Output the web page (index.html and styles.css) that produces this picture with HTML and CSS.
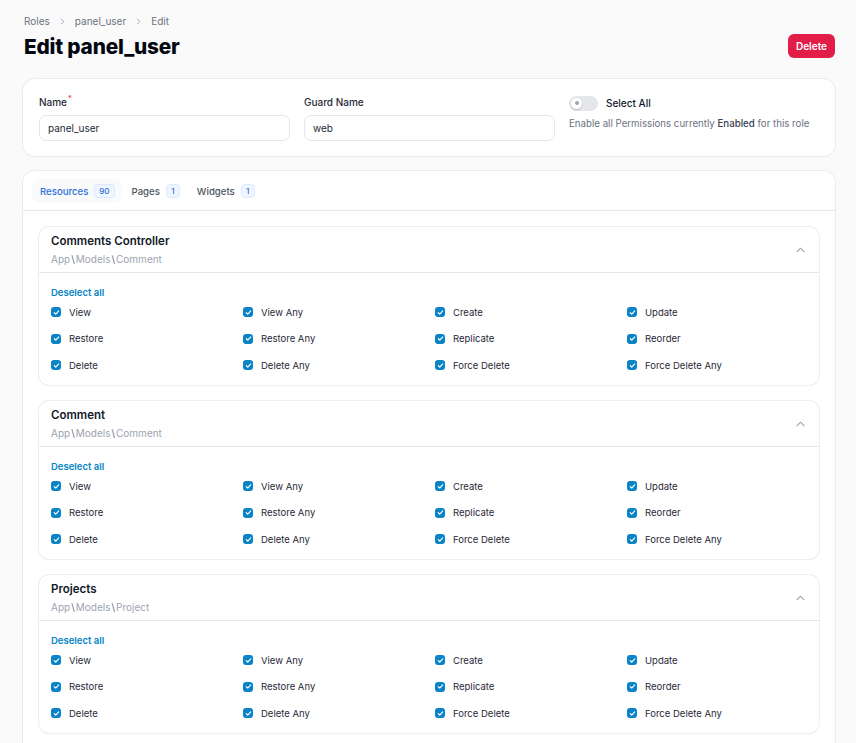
FILE: index.html
```html
<!DOCTYPE html>
<html>
<head>
<meta charset="utf-8">
<link rel="stylesheet" href="styles.css">
</head>
<body>
<div class="page">
  <nav class="crumbs">
    <span>Roles</span><svg class="sep" viewBox="0 0 6 8" width="5" height="7"><path d="M1.5 1l3 3-3 3" fill="none" stroke="#9ca3af" stroke-width="1.1" stroke-linecap="round" stroke-linejoin="round"/></svg><span>panel_user</span><svg class="sep" viewBox="0 0 6 8" width="5" height="7"><path d="M1.5 1l3 3-3 3" fill="none" stroke="#9ca3af" stroke-width="1.1" stroke-linecap="round" stroke-linejoin="round"/></svg><span>Edit</span>
  </nav>
  <div class="head">
    <h1>Edit panel_user</h1>
    <button class="btn-delete">Delete</button>
  </div>

  <section class="card form-card">
    <div class="field">
      <label>Name<sup>*</sup></label>
      <div class="input">panel_user</div>
    </div>
    <div class="field">
      <label>Guard Name</label>
      <div class="input">web</div>
    </div>
    <div class="field select-all">
      <div class="toggle-row"><span class="toggle"><span class="knob"></span></span><span class="toggle-label">Select All</span></div>
      <p class="help">Enable all Permissions currently <b>Enabled</b> for this role</p>
    </div>
  </section>

  <section class="card tabs-card">
    <div class="tabs">
      <div class="tab active">Resources <span class="badge">90</span></div>
      <div class="tab">Pages <span class="badge">1</span></div>
      <div class="tab">Widgets <span class="badge">1</span></div>
    </div>
    <div class="sections" id="sections"></div>
  </section>
</div>
<script src="app.js"></script>
</body>
</html>
```

FILE: app.js
```js
const groups = [
  ["Comments Controller", ["App","Models","Comment"]],
  ["Comment", ["App","Models","Comment"]],
  ["Projects", ["App","Models","Project"]]
];
const perms = ["View","View Any","Create","Update","Restore","Restore Any","Replicate","Reorder","Delete","Delete Any","Force Delete","Force Delete Any"];
const check = '<span class="cb"><svg viewBox="0 0 12 12" width="10" height="10"><path d="M3 6.2l2 2 4-4.4" fill="none" stroke="#fff" stroke-width="1.5" stroke-linecap="round" stroke-linejoin="round"/></svg></span>';
const wrap = document.getElementById('sections');
groups.forEach(([t, ns]) => {
  const s = document.createElement('div');
  s.className = 'sec';
  s.innerHTML =
    '<div class="sec-head"><div><div class="sec-title">' + t + '</div><div class="sec-sub">' +
    ns.map(n => '<span>' + n + '</span>').join('<span class="bs">\\</span>') +
    '</div></div><svg class="chev" viewBox="0 0 10 6" width="9" height="6"><path d="M1 5l4-4 4 4" fill="none" stroke="#9ca3af" stroke-width="1.2" stroke-linecap="round" stroke-linejoin="round"/></svg></div>' +
    '<div class="sec-body"><div class="deselect">Deselect all</div><div class="grid">' +
    perms.map(p => '<div class="perm">' + check + '<span>' + p + '</span></div>').join('') +
    '</div></div>';
  wrap.appendChild(s);
});
```

FILE: styles.css
```css
* { box-sizing: border-box; }
html, body { margin: 0; }
body {
  background: #fafafa;
  font-family: "Inter", "Noto Sans", sans-serif;
  color: #111827;
  width: 856px;
  height: 743px;
  overflow: hidden;
}
.page { padding: 14px 21px 0 24px; }
.crumbs { display: flex; gap: 10px; font-size: 10px; color: #6b7280; height: 14px; align-items: center; }
.head { display: flex; justify-content: space-between; align-items: center; margin-top: 0; height: 36px; }
h1 { margin: 0; font-size: 20.8px; font-weight: 800; letter-spacing: -0.2px; color: #030712; }
.btn-delete {
  background: #e11d48; color: #fff; border: 0; border-radius: 6px;
  font-family: inherit; font-size: 10px; font-weight: 600; height: 24px; width: 47px; padding: 0;
  margin-top: 0;
}
.card {
  background: #fff; border-radius: 12px;
  box-shadow: 0 0 0 1px #ececec, 0 1px 2px rgba(0,0,0,0.04);
}
.form-card {
  margin-top: 15px; margin-left: -1px;
  display: grid; grid-template-columns: 251px 251px 1fr; column-gap: 14px;
  padding: 16px 16px 15px 16px;
}
.field label { display: block; font-size: 10px; font-weight: 500; color: #1f2937; height: 14px; line-height: 14px; }
.field sup { color: #e11d48; font-size: 7px; vertical-align: top; line-height: 8px; margin-left: 1px; }
.input {
  margin-top: 6px; height: 26px; border: 1px solid #e5e7eb; border-radius: 7px;
  font-size: 10px; line-height: 24px; padding: 0 8px; color: #1f2937;
}
.toggle-row { display: flex; align-items: center; gap: 8px; height: 16px; margin-top: 0; }
.toggle { width: 29px; height: 15px; border-radius: 8px; background: #e5e7eb; position: relative; display: block; }
.knob { position: absolute; left: 2px; top: 2px; width: 11px; height: 11px; border-radius: 50%; background: #fff; box-shadow: 0 1px 2px rgba(0,0,0,.2); }
.knob::after { content: ""; position: absolute; left: 3.5px; top: 3.5px; width: 4px; height: 4px; border-radius: 50%; background: #9ca3af; }
.toggle-label { font-size: 10px; font-weight: 500; color: #111827; }
.help { margin: 6px 0 0 0; font-size: 9.7px; color: #6b7280; line-height: 14px; }
.help b { font-weight: 500; color: #374151; }

.tabs-card { margin-top: 15px; margin-left: -1px; padding-bottom: 40px; }
.tabs { display: flex; gap: 2px; padding: 8px 9px 7px 9px; border-bottom: 1px solid #e5e7eb; }
.tab { display: flex; align-items: center; gap: 6px; height: 24px; padding: 0 7px 0 8px; border-radius: 8px; font-size: 9.6px; font-weight: 500; color: #4b5563; }
.tab.active { background: #f9fafb; color: #2f6fd6; }
.badge { font-size: 8px; font-weight: 500; color: #2f6fd6; background: #eff6ff; border: 1px solid #dbeafe; border-radius: 4px; padding: 0 4px; min-width: 14px; text-align: center; height: 14px; line-height: 12px; }

.sections { padding: 16px 16px 0 16px; display: flex; flex-direction: column; gap: 16px; }
.sec { border-radius: 10px; box-shadow: 0 0 0 1px #eeeeee, 0 1px 2px rgba(0,0,0,0.04); background: #fff; }
.sec-head { display: flex; justify-content: space-between; align-items: flex-start; padding: 6px 14px 6px 12px; border-bottom: 1px solid #e5e7eb; height: 46px; }
.sec-title { font-size: 11.5px; font-weight: 600; line-height: 16px; color: #111827; }
.sec-sub { font-size: 10px; color: #9ca3af; line-height: 16px; margin-top: 2px; }
.sec-sub .bs { margin: 0 1px; color: #6b7280; }
.chev { margin-top: 14px; }
.sec-body { padding: 13px 12px 12px 12px; }
.deselect { font-size: 9.5px; font-weight: 600; color: #0284c7; line-height: 14px; height: 14px; }
.grid { margin-top: 4px; display: grid; grid-template-columns: repeat(4, 180px); column-gap: 12px; row-gap: 10.5px; }
.perm { display: flex; align-items: center; gap: 8px; height: 16px; font-size: 9.5px; color: #1f2937; }
.cb { width: 10px; height: 10px; border-radius: 3px; background: #0a84c7; display: flex; align-items: center; justify-content: center; flex: none; }
.cb svg { width: 9px; height: 9px; }
```
